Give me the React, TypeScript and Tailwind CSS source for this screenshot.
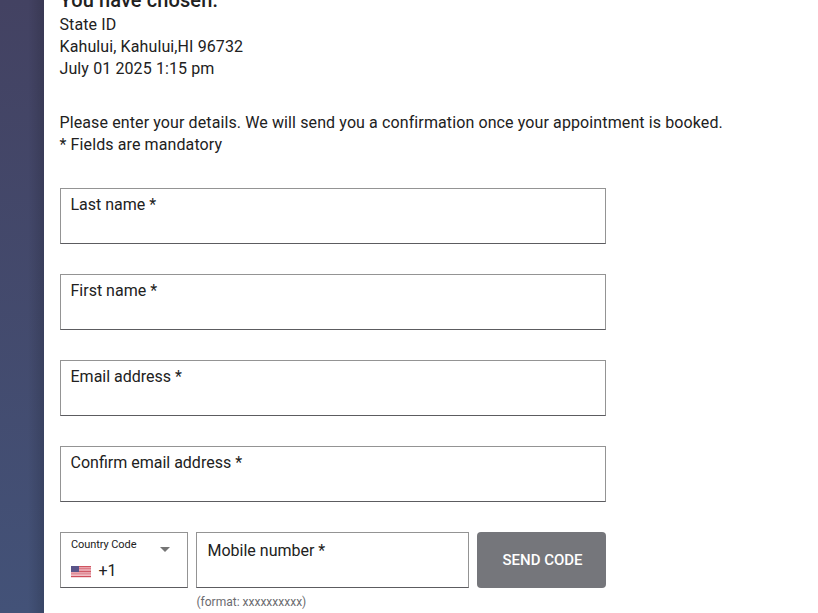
const fieldBox = 'h-14 border border-[#949494] border-b-[#5c5c60] bg-white';

function Field({ label }: { label: string }) {
  return (
    <div className={`${fieldBox} w-[546px] pl-[9.5px] pt-[5px]`}>
      <label className="block leading-[22px]">{label} *</label>
    </div>
  );
}

function UsFlag() {
  return (
    <svg width="20" height="12" viewBox="0 0 20 12" className="block" shapeRendering="crispEdges">
      <rect width="20" height="12" fill="#e9a3ad" />
      <rect width="20" height="1" fill="#cf5560" />
      <rect y="2" width="20" height="1" fill="#dc7d88" />
      <rect y="5" width="20" height="1" fill="#cf5966" />
      <rect y="7" width="20" height="1" fill="#e08f99" />
      <rect y="9" width="20" height="1" fill="#efbdc4" />
      <rect y="10" width="20" height="1" fill="#cf4d5b" />
      <rect y="11" width="20" height="1" fill="#f3d9dc" />
      <rect width="8" height="6" fill="#5a5489" />
    </svg>
  );
}

export default function App() {
  return (
    <div className="flex h-[613px] w-[818px] overflow-hidden bg-white font-['Roboto',sans-serif] text-base leading-[22px] text-[#212121]">
      <aside className="flex w-11 shrink-0 justify-end bg-linear-to-b from-[#434262] to-[#435278]">
        <div className="w-4 bg-linear-to-r from-transparent to-black/15" />
      </aside>
      <main className="flex-1 pl-[15.5px]">
        <div className="tracking-[0.11px]">
          <h2 className="-mt-3 mb-0.5 text-xl leading-6 font-medium">You have chosen:</h2>
          <p>State ID</p>
          <p>Kahului, Kahului,HI 96732</p>
          <p>July 01 2025 1:15 pm</p>
          <div className="mt-8">
            <p>Please enter your details. We will send you a confirmation once your appointment is booked.</p>
            <p>* Fields are mandatory</p>
          </div>
        </div>
        <form className="mt-8 ml-[0.5px] flex flex-col gap-[30px]">
          <Field label="Last name" />
          <Field label="First name" />
          <Field label="Email address" />
          <Field label="Confirm email address" />
          <div className="flex items-start gap-2">
            <div className={`${fieldBox} w-32 pl-2.5 pt-1`}>
              <div className="flex h-4 items-center justify-between pr-[17px]">
                <span className="text-[11px] leading-4 tracking-[-0.08px]">Country Code</span>
                <svg width="10" height="5" viewBox="0 0 10 5" className="mt-2">
                  <path d="M0 0h10L5 5z" fill="#757575" />
                </svg>
              </div>
              <div className="mt-[7px] flex items-center gap-[7.5px]">
                <div className="pt-px">
                  <UsFlag />
                </div>
                <span>+1</span>
              </div>
            </div>
            <div className="w-[273px]">
              <div className={`${fieldBox} pl-[10.5px] pt-[7px]`}>
                <label className="block">Mobile number *</label>
              </div>
              <p className="mt-1 pl-[0.5px] text-xs leading-5 text-[#6b6b70]">(format: xxxxxxxxxx)</p>
            </div>
            <button type="button" className="h-14 w-[129px] rounded bg-[#75767b] pl-0.5 text-[15px] font-medium text-white">
              SEND CODE
            </button>
          </div>
        </form>
      </main>
    </div>
  );
}
